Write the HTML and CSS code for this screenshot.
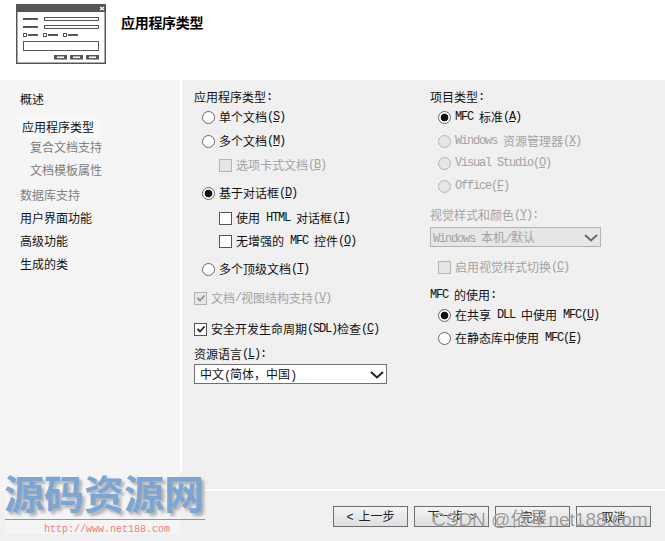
FILE: index.html
```html
<!DOCTYPE html>
<html lang="zh-CN">
<head>
<meta charset="utf-8">
<title>应用程序类型</title>
<link rel="stylesheet" href="styles.css">
</head>
<body>
<div class="wizard">
  <header class="head">
    <svg class="banner" width="90" height="60" viewBox="0 0 90 60">
      <rect width="90" height="60" fill="#555"/>
      <rect x="1.5" y="8" width="87" height="50.500" fill="#fff"/>
      <path d="M84 3l4 3M88 3l-4 3" stroke="#fff" stroke-width="1.300"/>
      <g fill="#555">
        <rect x="7" y="14" width="15" height="2"/>
        <rect x="7" y="22" width="15" height="2"/>
        <rect x="12" y="30" width="10" height="2"/>
        <rect x="32" y="30" width="10" height="2"/>
        <rect x="52" y="30" width="10" height="2"/>
      </g>
      <g fill="none" stroke="#555">
        <rect x="28.500" y="13.500" width="54" height="3"/>
        <rect x="28.500" y="21.500" width="54" height="3"/>
        <rect x="7.500" y="29.500" width="3" height="3"/>
        <rect x="27.500" y="29.500" width="3" height="3"/>
        <rect x="47.500" y="29.500" width="3" height="3"/>
        <rect x="7.500" y="37.500" width="75" height="9"/>
      </g>
      <g fill="#555">
        <rect x="38" y="51" width="13" height="4.500"/>
        <rect x="54" y="51" width="13" height="4.500"/>
        <rect x="70" y="51" width="13" height="4.500"/>
      </g>
      <g fill="#fff">
        <rect x="41" y="52.500" width="7" height="1.500"/>
        <rect x="57" y="52.500" width="7" height="1.500"/>
        <rect x="73" y="52.500" width="7" height="1.500"/>
      </g>
    </svg>
    <h1 class="title">应用程序类型</h1>
  </header>

  <div class="main">
    <nav class="side">
      <div class="nav-item">概述</div>
      <div class="nav-item current gap8">应用程序类型</div>
      <div class="nav-item sub muted">复合文档支持</div>
      <div class="nav-item sub muted gap3">文档模板属性</div>
      <div class="nav-item muted gap5">数据库支持</div>
      <div class="nav-item gap3">用户界面功能</div>
      <div class="nav-item gap3">高级功能</div>
      <div class="nav-item gap3">生成的类</div>
    </nav>

    <section class="content">
      <div class="col col-left">
        <div class="row">应用程序类型<span class="m">:</span></div>
        <div class="row in1"><span class="radio"></span>单个文档<span class="m">(<u>S</u>)</span></div>
        <div class="row in1 gap4"><span class="radio"></span>多个文档<span class="m">(<u>M</u>)</span></div>
        <div class="row in2 gap4 off"><span class="check"></span>选项卡式文档<span class="m">(<u>B</u>)</span></div>
        <div class="row in1 gap8"><span class="radio on"></span>基于对话框<span class="m">(<u>D</u>)</span></div>
        <div class="row in2 gap5"><span class="check"></span>使用<span class="m"> HTML </span>对话框<span class="m">(<u>I</u>)</span></div>
        <div class="row in2 gap3"><span class="check"></span>无增强的<span class="m"> MFC </span>控件<span class="m">(<u>O</u>)</span></div>
        <div class="row in1 gap8"><span class="radio"></span>多个顶级文档<span class="m">(<u>T</u>)</span></div>
        <div class="row gap9 off chk-tight"><span class="check">
          <svg width="10" height="10" viewBox="0 0 10 10"><path d="M1.500 5l2.500 2.500 4.500-5" fill="none" stroke="#8a8f96" stroke-width="1.800"/></svg>
        </span>文档<span class="m">/</span>视图结构支持<span class="m">(<u>V</u>)</span></div>
        <div class="row gap11 chk-tight"><span class="check">
          <svg width="10" height="10" viewBox="0 0 10 10"><path d="M1.500 5l2.500 2.500 4.500-5" fill="none" stroke="#1a2a44" stroke-width="1.800"/></svg>
        </span>安全开发生命周期<span class="m">(SDL)</span>检查<span class="m">(<u>C</u>)</span></div>
        <div class="row gap5">资源语言<span class="m">(<u>L</u>):</span></div>
        <div class="select wide">
          <span>中文<span class="m">(</span>简体，中国<span class="m">)</span></span>
          <svg class="chev" width="14" height="8" viewBox="0 0 14 8"><path d="M1 1l6 5.500L13 1" fill="none" stroke="#222" stroke-width="2"/></svg>
        </div>
      </div>

      <div class="col col-right">
        <div class="row">项目类型<span class="m">:</span></div>
        <div class="row in1"><span class="radio on"></span><span class="m">MFC </span>标准<span class="m">(<u>A</u>)</span></div>
        <div class="row in1 gap4 off"><span class="radio"></span><span class="m">Windows </span>资源管理器<span class="m">(<u>X</u>)</span></div>
        <div class="row in1 gap2 off"><span class="radio"></span><span class="m">Visual Studio(<u>O</u>)</span></div>
        <div class="row in1 gap3 off"><span class="radio"></span><span class="m">Office(<u>F</u>)</span></div>
        <div class="row gap9 off">视觉样式和颜色<span class="m">(<u>Y</u>):</span></div>
        <div class="select narrow off">
          <span><span class="m">Windows </span>本机<span class="m">/</span>默认</span>
          <svg class="chev" width="14" height="8" viewBox="0 0 14 8"><path d="M1 1l6 5.500L13 1" fill="none" stroke="#6a6a6a" stroke-width="2"/></svg>
        </div>
        <div class="row in1 gap10 off"><span class="check"></span>启用视觉样式切换<span class="m">(<u>C</u>)</span></div>
        <div class="row gap8"><span class="m">MFC </span>的使用<span class="m">:</span></div>
        <div class="row in1"><span class="radio on"></span>在共享<span class="m"> DLL </span>中使用<span class="m"> MFC(<u>U</u>)</span></div>
        <div class="row in1 gap3"><span class="radio"></span>在静态库中使用<span class="m"> MFC(<u>E</u>)</span></div>
      </div>
    </section>
  </div>

  <footer class="foot">
    <button class="btn" type="button"><span class="m">&lt; </span>上一步</button>
    <button class="btn" type="button">下一步<span class="m"> &gt;</span></button>
    <button class="btn" type="button">完成</button>
    <button class="btn" type="button">取消</button>
  </footer>
</div>

<div class="logo">
  <div class="logo-name">源码资源网</div>
  <div class="logo-url">http://www.net188.com</div>
</div>
<div class="csdn">CSDN @依星net188.com</div>
</body>
</html>
```

FILE: styles.css
```css
* { box-sizing: border-box; }

html, body {
  margin: 0;
  width: 665px;
  height: 541px;
  overflow: hidden;
}

body {
  position: relative;
  font: 12px/20px "Noto Sans CJK SC", "Liberation Sans", sans-serif;
  color: #111;
  background: #f0f0f0;
}

.wizard {
  display: flex;
  flex-direction: column;
  height: 541px;
}

/* Header */
.head {
  flex: 0 0 80px;
  display: flex;
  align-items: flex-start;
  padding: 4px 0 0 16px;
  background: #fff;
}

.banner { flex: none; }

.title {
  margin: 7px 0 0 15px;
  font-size: 14px;
  line-height: 22px;
  font-weight: 700;
  letter-spacing: -0.3px;
  color: #000;
}

/* Body */
.main {
  flex: 0 0 409px;
  display: flex;
}

.side {
  flex: 0 0 180px;
  padding: 9px 0 0 20px;
  background: #f5f5f5;
}

.nav-item { height: 20px; line-height: 20px; }
.nav-item.current {
  width: 80px;
  margin-left: -1px;
  padding-left: 3px;
  background: #f8f9fd;
}
.nav-item.sub { margin-left: 10px; }
.muted { color: #808080; }

.content {
  flex: 1;
  display: flex;
  padding: 7px 0 0 12px;
  border-left: 2px solid #fff;
}

.col-left { flex: 0 0 236px; }
.col-right { flex: 0 0 172px; }

.row {
  display: flex;
  align-items: center;
  height: 20px;
  white-space: pre;
}

.in1 { padding-left: 8px; }
.in2 { padding-left: 25px; }

.gap2 { margin-top: 2px; }
.gap3 { margin-top: 3px; }
.gap4 { margin-top: 4px; }
.gap5 { margin-top: 5px; }
.gap8 { margin-top: 8px; }
.gap9 { margin-top: 9px; }
.gap10 { margin-top: 10px; }
.gap11 { margin-top: 11px; }

/* The dialog's Latin text is a narrow fixed-width face, half a CJK cell wide */
.m {
  font-family: "Liberation Mono", monospace;
  font-size: 12px;
  letter-spacing: -1.2px;
  white-space: pre;
}

.off { color: #a3a3a3; }

/* Controls */
.radio {
  flex: none;
  width: 13px;
  height: 13px;
  margin-right: 4px;
  border: 1px solid #666;
  border-radius: 50%;
  background: #fff;
}
.radio.on {
  background: radial-gradient(circle, #111 0 3.500px, #fff 4.200px);
}
.off .radio {
  border-color: #b4b4b4;
  background: #e6e6e6;
}

.check {
  flex: none;
  display: flex;
  align-items: center;
  justify-content: center;
  width: 13px;
  height: 13px;
  margin-right: 4px;
  border: 1px solid #555;
  background: #fff;
}
.off .check {
  border-color: #b4b4b4;
  background: #e6e6e6;
}

.select {
  display: flex;
  align-items: center;
  justify-content: space-between;
  height: 20px;
  padding: 1px 2px 0 5px;
  border: 1px solid #707070;
  background: #fff;
}
.select.wide { width: 193px; }
.select.narrow {
  width: 171px;
  margin-top: 2px;
  padding-left: 2px;
  border-color: #b4b4b4;
  background: #e6e6e6;
}
.chev { flex: none; }

/* Footer */
.foot {
  flex: 1;
  display: flex;
  justify-content: flex-end;
  gap: 6px;
  padding: 15px 14px 0 0;
  border-top: 2px solid #fff;
}

.btn {
  width: 75px;
  height: 21px;
  padding: 0;
  font: inherit;
  line-height: 18px;
  color: #222;
  border: 1px solid #6e6e6e;
  background: linear-gradient(#f4f4f4, #dedede);
}

/* Overlaid watermarks */
.logo {
  position: absolute;
  left: 5px;
  top: 472px;
  width: 200px;
  height: 62px;
  background: linear-gradient(90deg, #f5f5f5 175px, #f0f0f0 175px);
}

.logo-name {
  height: 48px;
  border-bottom: 1px solid #a89080;
  font-size: 40px;
  line-height: 40px;
  font-weight: 700;
  text-indent: -1px;
  color: #7ba5d4;
  text-shadow: 3px 3px 3px rgba(0, 0, 0, 0.28);
  white-space: nowrap;
}

.logo-url {
  padding-left: 39px;
  font-family: "Liberation Mono", monospace;
  font-size: 10px;
  line-height: 20px;
  color: #f27b7b;
  white-space: nowrap;
}

.csdn {
  position: absolute;
  left: 432px;
  top: 508px;
  font: 19px/24px "Liberation Sans", "Noto Sans CJK SC", sans-serif;
  color: rgba(90, 90, 90, 0.62);
  text-shadow: 0 0 1px #fff;
  white-space: nowrap;
}
```
